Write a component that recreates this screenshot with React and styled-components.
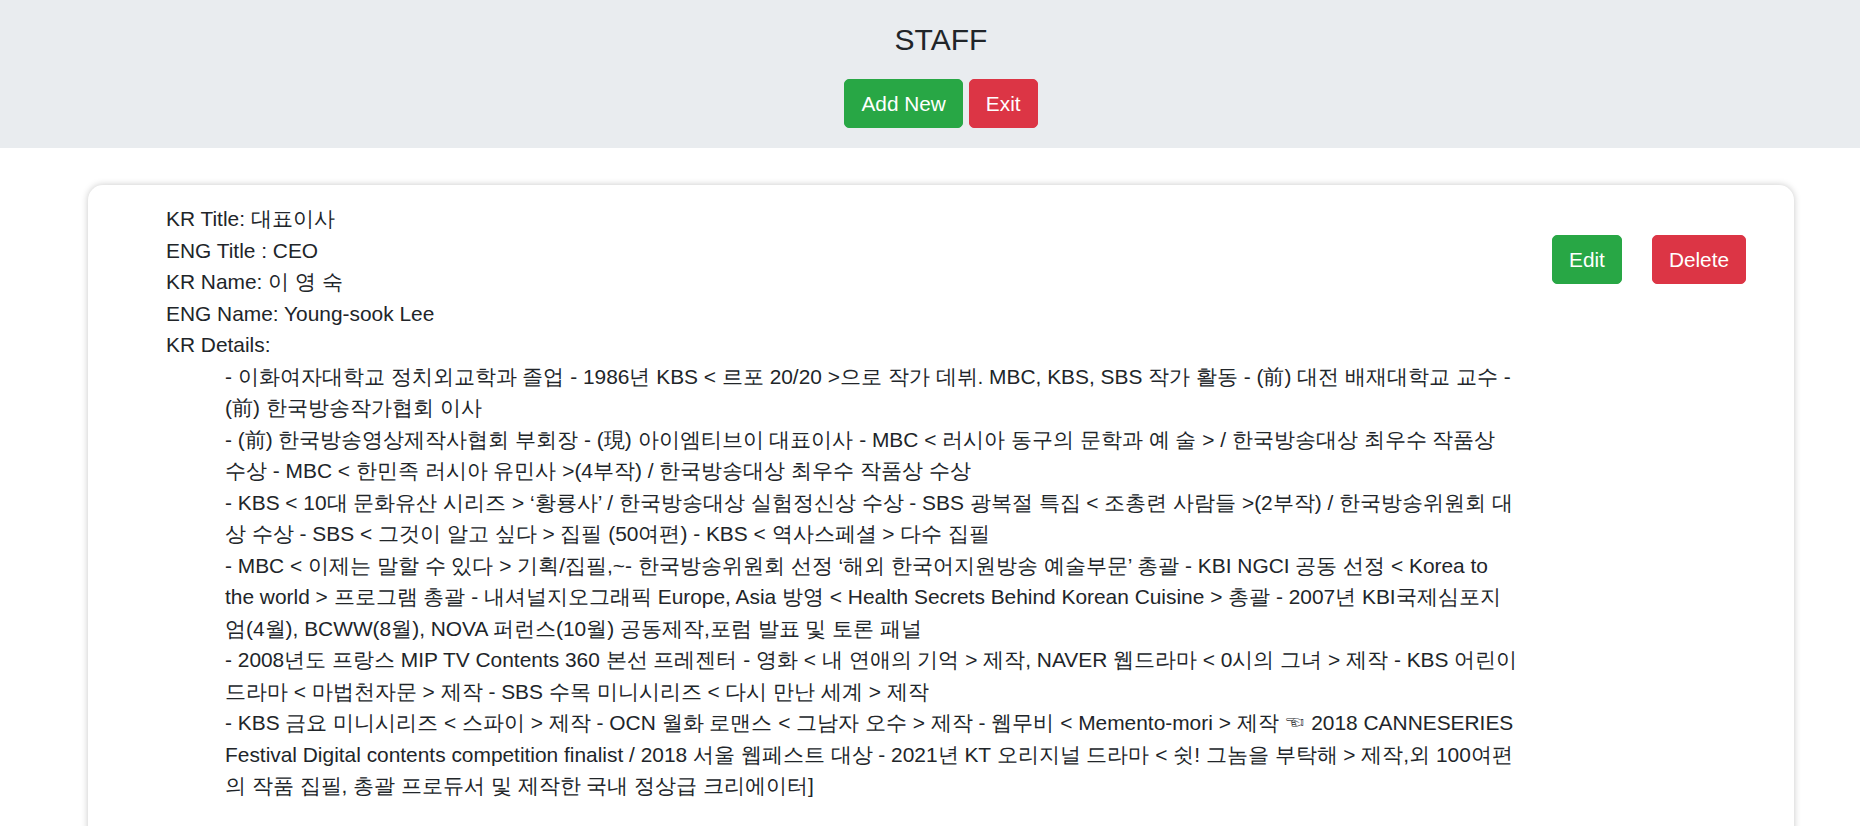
import React from 'react';
import styled, { createGlobalStyle } from 'styled-components';

const GlobalStyle = createGlobalStyle`
  html, body {
    margin: 0;
    padding: 0;
    background: #ffffff;
    overflow-x: hidden;
  }
  body {
    font-family: "Liberation Sans", Arial, sans-serif;
    color: #212529;
  }
  * {
    box-sizing: border-box;
  }
`;

const Page = styled.div`
  width: 1882px;
`;

const Header = styled.header`
  background: #e9ecef;
  height: 148px;
  padding-top: 22px;
  display: flex;
  flex-direction: column;
  align-items: center;
`;

const Title = styled.h2`
  margin: 0;
  font-size: 30px;
  font-weight: 400;
  line-height: 36px;
  color: #212529;
`;

const HeaderActions = styled.div`
  display: flex;
  gap: 6px;
  margin-top: 21px;
`;

const Button = styled.button`
  font-family: inherit;
  font-size: 20.8px;
  line-height: 31px;
  padding: 8px 16px;
  border: 1px solid ${(p) => (p.variant === 'danger' ? '#dc3545' : '#28a745')};
  background: ${(p) => (p.variant === 'danger' ? '#dc3545' : '#28a745')};
  color: #ffffff;
  border-radius: 5px;
  cursor: pointer;
`;

const Card = styled.section`
  margin: 37px 88px 0 88px;
  background: #ffffff;
  border-radius: 15px;
  box-shadow: 0 0 7px rgba(0, 0, 0, 0.22);
  display: flex;
  flex-direction: row;
  align-items: flex-start;
  padding: 18px 48px 60px 78px;
`;

const Info = styled.div`
  flex: 0 0 1354px;
  font-size: 20.9px;
  line-height: 31.5px;
`;

const InfoRow = styled.div`
  white-space: nowrap;
`;

const Details = styled.div`
  padding-left: 59px;
`;

const DetailLine = styled.div`
  word-break: normal;
`;

const CardActions = styled.div`
  display: flex;
  gap: 30px;
  margin-top: 32px;
  margin-left: auto;
`;

const details = [
  '- 이화여자대학교 정치외교학과 졸업 - 1986년 KBS < 르포 20/20 >으로 작가 데뷔. MBC, KBS, SBS 작가 활동 - (前) 대전 배재대학교 교수 - (前) 한국방송작가협회 이사',
  '- (前) 한국방송영상제작사협회 부회장 - (現) 아이엠티브이 대표이사 - MBC < 러시아 동구의 문학과 예 술 > / 한국방송대상 최우수 작품상 수상 - MBC < 한민족 러시아 유민사 >(4부작) / 한국방송대상 최우수 작품상 수상',
  '- KBS < 10대 문화유산 시리즈 > ‘황룡사’ / 한국방송대상 실험정신상 수상 - SBS 광복절 특집 < 조총련 사람들 >(2부작) / 한국방송위원회 대상 수상 - SBS < 그것이 알고 싶다 > 집필 (50여편) - KBS < 역사스페셜 > 다수 집필',
  '- MBC < 이제는 말할 수 있다 > 기획/집필,~- 한국방송위원회 선정 ‘해외 한국어지원방송 예술부문’ 총괄 - KBI NGCI 공동 선정 < Korea to the world > 프로그램 총괄 - 내셔널지오그래픽 Europe, Asia 방영 < Health Secrets Behind Korean Cuisine > 총괄 - 2007년 KBI국제심포지엄(4월), BCWW(8월), NOVA 퍼런스(10월) 공동제작,포럼 발표 및 토론 패널',
  '- 2008년도 프랑스 MIP TV Contents 360 본선 프레젠터 - 영화 < 내 연애의 기억 > 제작, NAVER 웹드라마 < 0시의 그녀 > 제작 - KBS 어린이드라마 < 마법천자문 > 제작 - SBS 수목 미니시리즈 < 다시 만난 세계 > 제작',
  '- KBS 금요 미니시리즈 < 스파이 > 제작 - OCN 월화 로맨스 < 그남자 오수 > 제작 - 웹무비 < Memento-mori > 제작 ☜ 2018 CANNESERIES Festival Digital contents competition finalist / 2018 서울 웹페스트 대상 - 2021년 KT 오리지널 드라마 < 쉿! 그놈을 부탁해 > 제작,외 100여편의 작품 집필, 총괄 프로듀서 및 제작한 국내 정상급 크리에이터]'
];

const staff = {
  krTitle: '대표이사',
  engTitle: 'CEO',
  krName: '이 영 숙',
  engName: 'Young-sook Lee',
  krDetails: details
};

const StaffCard = ({ member }) => (
  <Card>
    <Info>
      <InfoRow>KR Title: {member.krTitle}</InfoRow>
      <InfoRow>ENG Title : {member.engTitle}</InfoRow>
      <InfoRow>KR Name: {member.krName}</InfoRow>
      <InfoRow>ENG Name: {member.engName}</InfoRow>
      <InfoRow>KR Details:</InfoRow>
      <Details>
        {member.krDetails.map((line, i) => (
          <DetailLine key={i}>{line}</DetailLine>
        ))}
      </Details>
    </Info>
    <CardActions>
      <Button>Edit</Button>
      <Button variant="danger">Delete</Button>
    </CardActions>
  </Card>
);

export default function App() {
  return (
    <Page>
      <GlobalStyle />
      <Header>
        <Title>STAFF</Title>
        <HeaderActions>
          <Button>Add New</Button>
          <Button variant="danger">Exit</Button>
        </HeaderActions>
      </Header>
      <StaffCard member={staff} />
    </Page>
  );
}
